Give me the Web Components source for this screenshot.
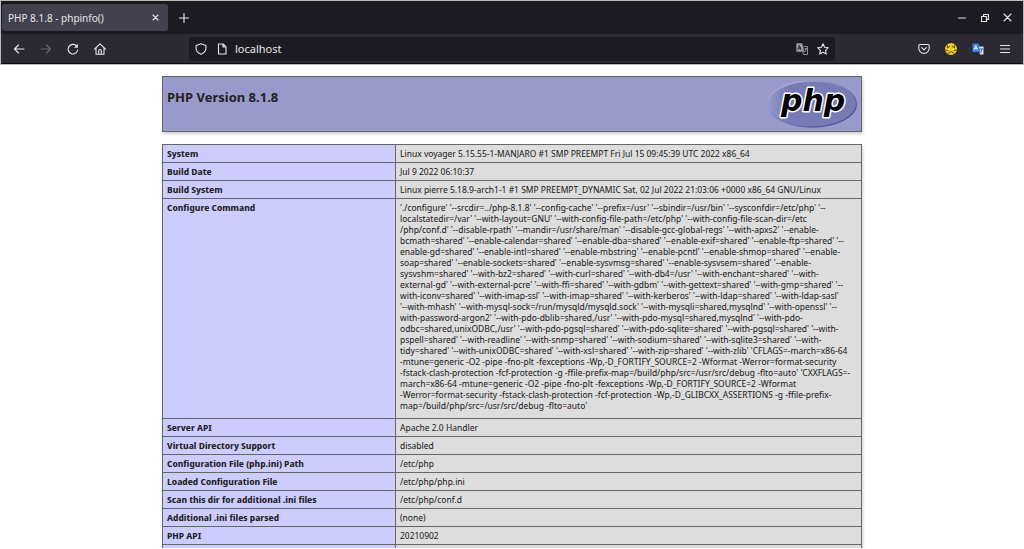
<!DOCTYPE html>
<html lang="en">
<head>
<meta charset="utf-8">
<title>PHP 8.1.8 - phpinfo()</title>
<style>
html, body { margin: 0; height: 100%; }
body { background: #fff; font-family: "Noto Sans Display", "Noto Sans", sans-serif; overflow: hidden; }
</style>
</head>
<body>
<browser-window>
  <browser-tab slot="tabs">PHP 8.1.8 - phpinfo()</browser-tab>
  <address-bar slot="address" url="localhost"></address-bar>
  <php-info></php-info>
</browser-window>

<script>
const define = (name, html, setup) => {
  const template = document.createElement('template');
  template.innerHTML = html;
  customElements.define(name, class extends HTMLElement {
    constructor() {
      super();
      this.attachShadow({ mode: 'open' }).append(template.content.cloneNode(true));
    }
    connectedCallback() { if (setup) setup(this, this.shadowRoot); }
  });
};

const buttonCss = `
  button { all: unset; box-sizing: border-box; display: grid; place-items: center; flex: none; cursor: pointer; }
  svg { display: block; fill: none; stroke: currentColor; stroke-width: 1.1; stroke-linecap: round; stroke-linejoin: round; }`;

define('browser-window', `
<style>
  :host { display: flex; flex-direction: column; height: 100vh; box-sizing: border-box; border: 1px solid #b9bcbc; border-width: 1px 1px 0 1px; border-image: linear-gradient(#b9bcbc 0 65px, #fff 65px) 1; padding-bottom: 1px; color: #e6e6ea; }
  .strip { display: flex; align-items: center; height: 33px; flex: none; padding: 0 4px 0 1px; background: #1c1b22; }
  .bar { display: flex; align-items: center; height: 29px; flex: none; padding: 0 5px 0 4px; background: #2b2a33; border-bottom: 1px solid #0c0c0d; }
  .space { flex: 1; }
  .gap { width: 76px; flex: none; }
  .tail { width: 75px; flex: none; }
  main { flex: 1; min-height: 0; overflow: hidden; border-top: 1px solid #b9bcbc; color: #222; }
  ${buttonCss}
  .new { width: 31px; height: 28px; }
  .win { width: 23px; height: 28px; }
  .nav { width: 27px; height: 26px; }
  .off { color: #69686f; }
</style>
<header>
  <div class="strip">
    <slot name="tabs"></slot>
    <button class="new" aria-label="New tab"><svg width="10" height="10"><path d="M5 .5v9M.5 5h9"/></svg></button>
    <span class="space"></span>
    <button class="win" aria-label="Minimize"><svg width="8" height="8"><path d="M.5 4h7"/></svg></button>
    <button class="win" aria-label="Restore"><svg width="8" height="8"><path d="M.5 2.500h5v5h-5zM2.500 2.500v-2h5v5h-2"/></svg></button>
    <button class="win" aria-label="Close"><svg width="9" height="9"><path d="M1 1l7 7M8 1l-7 7"/></svg></button>
  </div>
  <div class="bar">
    <button class="nav" aria-label="Back"><svg width="12" height="12"><path d="M11 6H1.500M5.500 2l-4 4 4 4"/></svg></button>
    <button class="nav off" aria-label="Forward"><svg width="12" height="12"><path d="M1 6h9.500M6.500 2l4 4-4 4"/></svg></button>
    <button class="nav" aria-label="Reload"><svg width="12" height="12"><path d="M10.700 7A4.800 4.800 0 1 1 9.200 2.600"/><path d="M10.900.8v3.900H7z" fill="currentColor" stroke="none"/></svg></button>
    <button class="nav" aria-label="Home"><svg width="12" height="12"><path d="M.7 6L6 .8 11.300 6M2 5v6.300h8V5M4.700 11V7.800a1.300 1.300 0 0 1 2.600 0V11"/></svg></button>
    <span class="gap"></span>
    <slot name="address"></slot>
    <span class="tail"></span>
    <button class="nav" aria-label="Pocket"><svg width="12" height="12"><path d="M1.800 1.500h8.400q1 0 1 1v2.800a5.200 5.200 0 0 1-10.400 0V2.500q0-1 1-1zM3.700 4.700L6 6.900l2.300-2.200"/></svg></button>
    <button class="nav" aria-label="Extension"><svg width="14" height="14"><circle cx="7" cy="7" r="6" fill="#f4cd1b" stroke="none"/><path d="M3 2.500l.7 3.500 2-1.700M11 2.500l-.7 3.500-2-1.700M1.800 8l2.200.5M12.200 8l-2.200.5M3.800 11.500l3.200-2 3.200 2" stroke="#5f4c1c" stroke-width="1"/><path d="M4.300 7.300h1M8.700 7.300h1" stroke="#fff3b0"/></svg></button>
    <button class="nav" aria-label="Translate"><svg width="12" height="12"><path d="M6 3.500h5.500v8H8z" fill="#dfe3ea" stroke="none"/><path d="M.5.500h6l2 8.500h-8z" fill="#3b82f0" stroke="none"/><path d="M2.300 6.500l1.500-4 1.500 4M2.800 5.200h2" stroke="#fff" stroke-width=".9"/><path d="M8 6h2.800M8.800 9.500l1.200-3.500" stroke="#3b5f9f" stroke-width=".9"/></svg></button>
    <button class="nav" aria-label="Menu"><svg width="10" height="10"><path d="M.5 1.500h9M.5 5h9M.5 8.500h9"/></svg></button>
  </div>
</header>
<main><slot></slot></main>`);

define('browser-tab', `
<style>
  :host { display: flex; align-items: center; box-sizing: border-box; width: 166px; height: 27px; padding: 0 6px; border-radius: 3px; background: #42414d; font: 10px/16px "Noto Sans", sans-serif; white-space: nowrap; }
  span { flex: 1; }
  ${buttonCss}
  button { width: 14px; height: 14px; }
</style>
<span><slot></slot></span>
<button aria-label="Close tab"><svg width="7" height="7"><path d="M1 1l5 5M6 1L1 6"/></svg></button>`);

define('address-bar', `
<style>
  :host { display: flex; flex: 1; align-items: center; box-sizing: border-box; height: 24px; padding: 0 2px 0 1px; border-radius: 3px; background: #1c1b22; }
  input { all: unset; flex: 1; min-width: 0; padding-left: 3px; font: 11px/18px "Noto Sans", sans-serif; color: #e6e6ea; }
  ${buttonCss}
  button { width: 21px; height: 22px; }
</style>
<button aria-label="Tracking protection"><svg width="12" height="12"><path d="M6 .8l4.900 1.700v2.700q0 4-4.900 6.100Q1.100 9.200 1.100 5.200V2.500z"/></svg></button>
<button aria-label="Site information"><svg width="10" height="12"><path d="M1.500 1h4.700L9 3.800V11H1.500zM6 1v3h3"/></svg></button>
<input type="text" aria-label="Address">
<button aria-label="Translate page"><svg width="12" height="12"><g opacity=".7"><path d="M.3.300h6l2 8.500h-8z" fill="#d0d0d6" stroke="none"/><path d="M1.900 6.500l1.500-4 1.500 4M2.400 5.200h2" stroke="#1c1b22" stroke-width=".9"/><path d="M8 3.500h3.500v8H7.500L7 9.500M8.800 6H11M10 5.500q0 2-1.200 3.500" stroke-width=".8"/></g></svg></button>
<button aria-label="Bookmark"><svg width="12" height="12"><path d="M6 .8l1.600 3.400 3.700.5-2.700 2.600.7 3.800L6 9.300l-3.300 1.800.7-3.800L.7 4.700l3.700-.5z"/></svg></button>`,
(host, root) => { root.querySelector('input').value = host.getAttribute('url'); });

define('php-logo', `
<style>
  :host { display: block; }
  svg { display: block; }
  text { font: italic 700 30px "DejaVu Sans", sans-serif; }
</style>
<svg width="92" height="50" viewBox="0 0 92 50" role="img" aria-label="PHP logo">
  <defs>
    <linearGradient id="rim" x1="0" y1="0" x2="1" y2="1"><stop offset="0" stop-color="#bfc2e2"/><stop offset=".5" stop-color="#777bb3"/><stop offset="1" stop-color="#3c3f91"/></linearGradient>
    <linearGradient id="face" x1="0" y1="0" x2="1" y2="0"><stop offset="0" stop-color="#989bcc"/><stop offset=".22" stop-color="#777bb3"/></linearGradient>
  </defs>
  <ellipse cx="46" cy="25" rx="44.500" ry="23" fill="url(#face)" stroke="url(#rim)" stroke-width="1.300"/>
  <text x="15" y="32" fill="#000" stroke="#fff" stroke-width="3" stroke-linejoin="round" paint-order="stroke">php</text>
</svg>`);

const configure = `'./configure' '--srcdir=../php-8.1.8' '--config-cache' '--prefix=/usr' '--sbindir=/usr/bin' '--sysconfdir=/etc/php' '--
localstatedir=/var' '--with-layout=GNU' '--with-config-file-path=/etc/php' '--with-config-file-scan-dir=/etc
/php/conf.d' '--disable-rpath' '--mandir=/usr/share/man' '--disable-gcc-global-regs' '--with-apxs2' '--enable-
bcmath=shared' '--enable-calendar=shared' '--enable-dba=shared' '--enable-exif=shared' '--enable-ftp=shared' '--
enable-gd=shared' '--enable-intl=shared' '--enable-mbstring' '--enable-pcntl' '--enable-shmop=shared' '--enable-
soap=shared' '--enable-sockets=shared' '--enable-sysvmsg=shared' '--enable-sysvsem=shared' '--enable-
sysvshm=shared' '--with-bz2=shared' '--with-curl=shared' '--with-db4=/usr' '--with-enchant=shared' '--with-
external-gd' '--with-external-pcre' '--with-ffi=shared' '--with-gdbm' '--with-gettext=shared' '--with-gmp=shared' '--
with-iconv=shared' '--with-imap-ssl' '--with-imap=shared' '--with-kerberos' '--with-ldap=shared' '--with-ldap-sasl'
'--with-mhash' '--with-mysql-sock=/run/mysqld/mysqld.sock' '--with-mysqli=shared,mysqlnd' '--with-openssl' '--
with-password-argon2' '--with-pdo-dblib=shared,/usr' '--with-pdo-mysql=shared,mysqlnd' '--with-pdo-
odbc=shared,unixODBC,/usr' '--with-pdo-pgsql=shared' '--with-pdo-sqlite=shared' '--with-pgsql=shared' '--with-
pspell=shared' '--with-readline' '--with-snmp=shared' '--with-sodium=shared' '--with-sqlite3=shared' '--with-
tidy=shared' '--with-unixODBC=shared' '--with-xsl=shared' '--with-zip=shared' '--with-zlib' 'CFLAGS=-march=x86-64
-mtune=generic -O2 -pipe -fno-plt -fexceptions -Wp,-D_FORTIFY_SOURCE=2 -Wformat -Werror=format-security
-fstack-clash-protection -fcf-protection -g -ffile-prefix-map=/build/php/src=/usr/src/debug -flto=auto' 'CXXFLAGS=-
march=x86-64 -mtune=generic -O2 -pipe -fno-plt -fexceptions -Wp,-D_FORTIFY_SOURCE=2 -Wformat
-Werror=format-security -fstack-clash-protection -fcf-protection -Wp,-D_GLIBCXX_ASSERTIONS -g -ffile-prefix-
map=/build/php/src=/usr/src/debug -flto=auto'`;

const rows = [
  ['System', 'Linux voyager 5.15.55-1-MANJARO #1 SMP PREEMPT Fri Jul 15 09:45:39 UTC 2022 x86_64'],
  ['Build Date', 'Jul 9 2022 06:10:37'],
  ['Build System', 'Linux pierre 5.18.9-arch1-1 #1 SMP PREEMPT_DYNAMIC Sat, 02 Jul 2022 21:03:06 +0000 x86_64 GNU/Linux'],
  ['Configure Command', configure],
  ['Server API', 'Apache 2.0 Handler'],
  ['Virtual Directory Support', 'disabled'],
  ['Configuration File (php.ini) Path', '/etc/php'],
  ['Loaded Configuration File', '/etc/php/php.ini'],
  ['Scan this dir for additional .ini files', '/etc/php/conf.d'],
  ['Additional .ini files parsed', '(none)'],
  ['PHP API', '20210902'],
  ['', ''],
];

define('php-info', `
<style>
  :host { display: block; width: 700px; max-width: 100%; margin: 0 auto; padding-top: 11px; font-size: 9px; line-height: 11px; }
  .title { display: flex; justify-content: space-between; box-sizing: border-box; height: 56px; margin-bottom: 12px; padding: 2px 3px 0 4px; border: 1px solid #666; background: #9999cc; box-shadow: 1px 2px 3px #ccc; }
  h1 { margin: 9px 0 0; font: 700 13px/18px "Noto Sans", sans-serif; }
  table { width: 100%; table-layout: fixed; border-collapse: collapse; box-shadow: 1px 2px 3px #ccc; }
  th, td { height: 11px; padding: 3px 4px; border: 1px solid #666; vertical-align: baseline; text-align: left; }
  th { width: 224px; background: #ccccff; font-weight: 700; }
  td { background: #dddddd; white-space: pre; }
  .long > * { padding-bottom: 7px; }
</style>
<div class="title"><h1>PHP Version 8.1.8</h1><php-logo></php-logo></div>
<table><tbody></tbody></table>`,
(host, root) => {
  const body = root.querySelector('tbody');
  for (const [name, value] of rows) {
    const row = body.insertRow();
    const head = document.createElement('th');
    head.scope = 'row';
    head.textContent = name;
    row.append(head);
    row.insertCell().textContent = value;
    row.classList.toggle('long', value.includes('\n'));
  }
});
</script>
</body>
</html>
